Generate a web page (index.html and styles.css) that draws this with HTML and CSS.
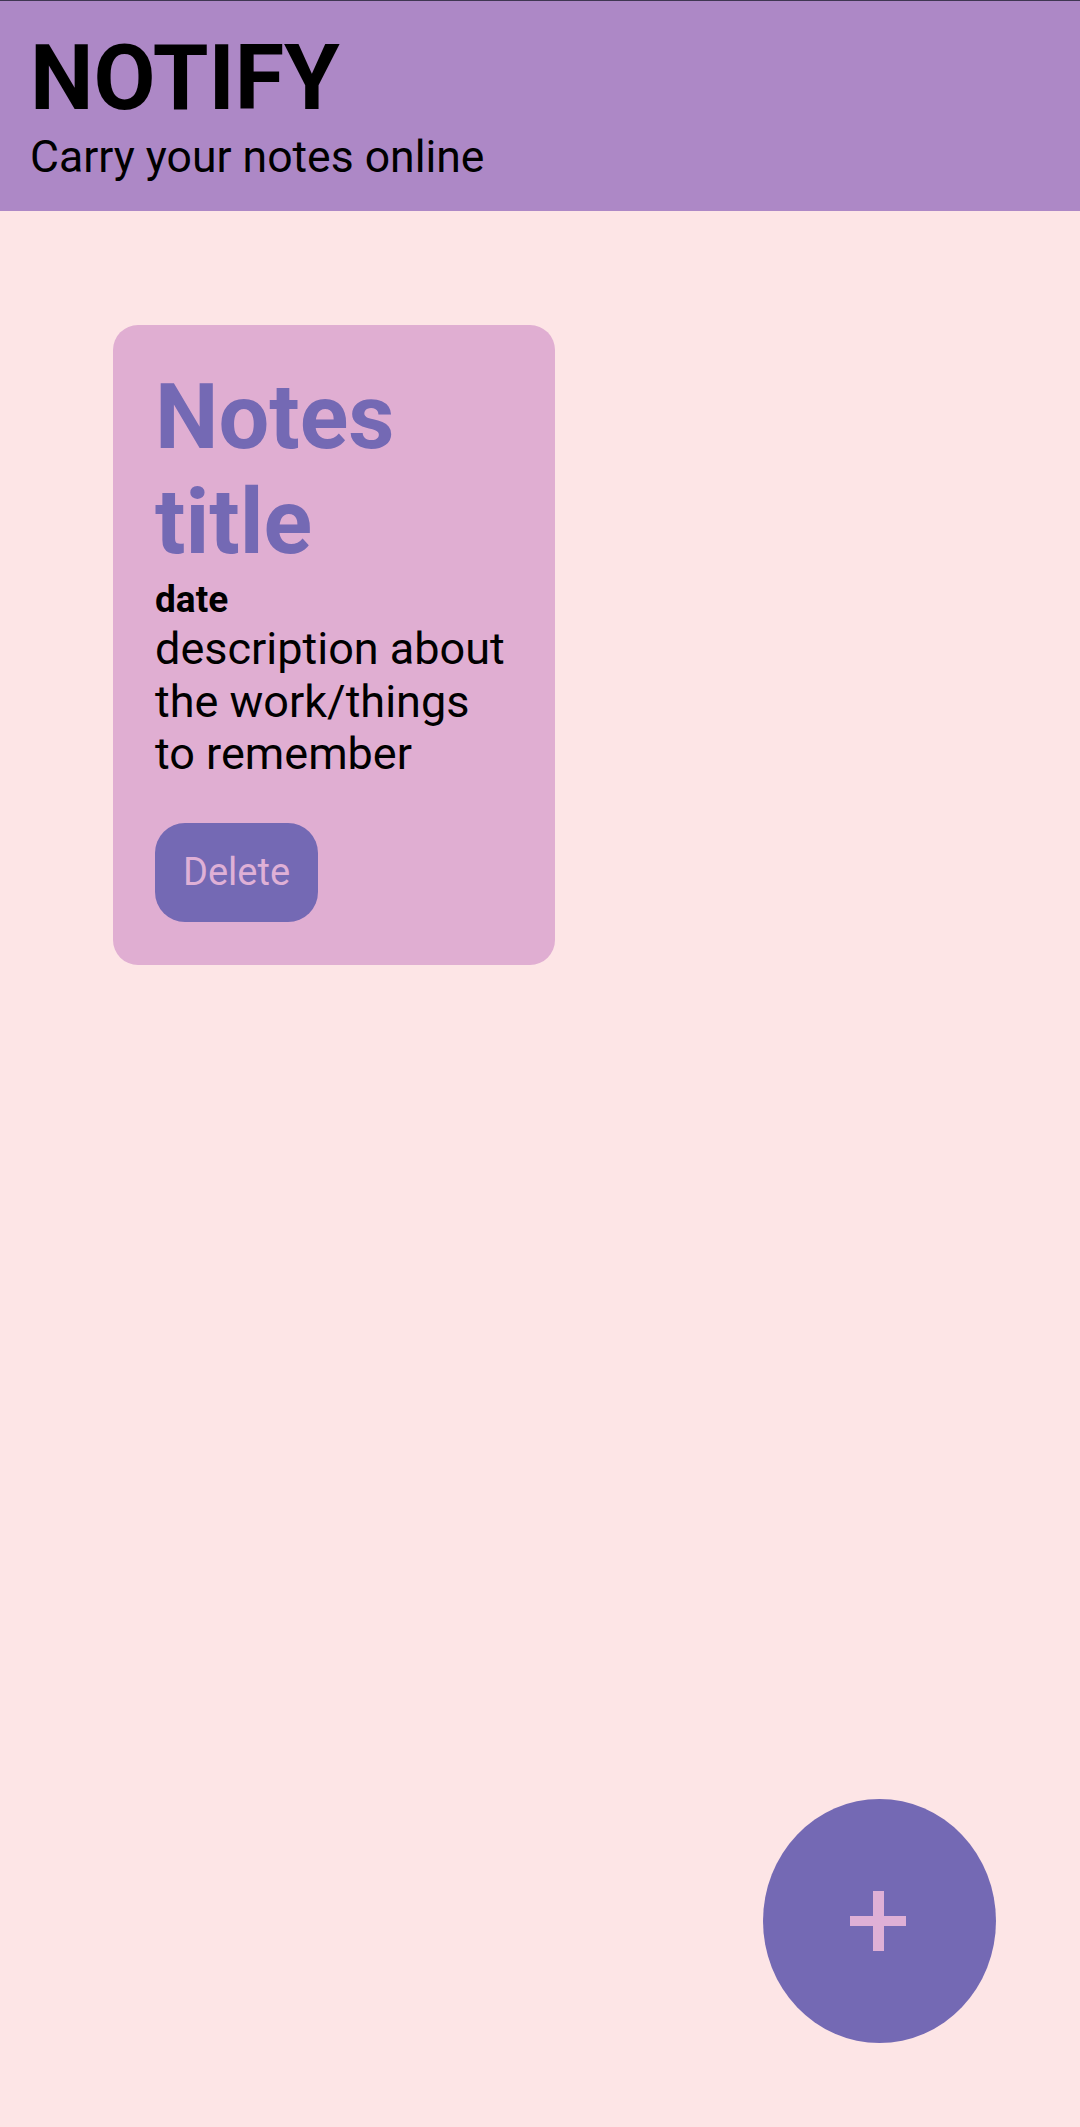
FILE: index.html
```html
<!DOCTYPE html>
<html>
<head>
<meta charset="utf-8">
<link rel="stylesheet" href="styles.css">
</head>
<body>
<header class="header">
  <h1 class="brand">NOTIFY</h1>
  <p class="tagline">Carry your notes online</p>
</header>
<main class="notes">
  <article class="note">
    <h2 class="note-title">Notes title</h2>
    <div class="note-date">date</div>
    <p class="note-desc">description about the work/things to remember</p>
    <button class="delete-btn">Delete</button>
  </article>
</main>
<button class="fab" aria-label="Add note">
  <svg width="60" height="60" viewBox="0 0 60 60"><rect x="0" y="25" width="56" height="10" fill="#dfb0d6"/><rect x="23" y="0" width="11" height="60" fill="#dfb0d6"/></svg>
</button>
</body>
</html>
```
FILE: styles.css
```css
html, body {
  margin: 0;
  padding: 0;
}
body {
  background: #fde5e6;
  font-family: Roboto, "Noto Sans", sans-serif;
  width: 1080px;
  height: 2127px;
  position: relative;
  overflow: hidden;
}
.header {
  background: #ad88c6;
  border-top: 1px solid #3f3652;
  height: 211px;
  box-sizing: border-box;
  padding: 24px 30px 0;
}
.brand {
  margin: 0;
  font-weight: 700;
  font-size: 90px;
  line-height: 108px;
  color: #000;
}
.tagline {
  margin: 0;
  font-size: 44.5px;
  line-height: 48px;
  color: #000;
}
.notes {
  padding: 114px 0 0 113px;
}
.note {
  width: 442px;
  box-sizing: border-box;
  background: #e0aed2;
  border-radius: 25px;
  padding: 40px 42px 43px;
}
.note-title {
  margin: 0;
  font-weight: 700;
  font-size: 90px;
  line-height: 105px;
  color: #7469b4;
}
.note-date {
  font-weight: 700;
  font-size: 37px;
  line-height: 46px;
  color: #000;
  margin-top: 2px;
}
.note-desc {
  margin: 0;
  font-size: 45px;
  line-height: 52.5px;
  color: #000;
}
.delete-btn {
  margin-top: 42px;
  width: 163px;
  height: 99px;
  border: none;
  border-radius: 30px;
  background: #7469b4;
  color: #dfb0d6;
  font-family: Roboto, "Noto Sans", sans-serif;
  font-size: 38px;
  padding: 0;
  display: block;
}
.fab {
  position: absolute;
  left: 763px;
  top: 1799px;
  width: 233px;
  height: 244px;
  border-radius: 50%;
  border: none;
  background: #7469b4;
  display: flex;
  align-items: center;
  justify-content: center;
  padding: 0;
}
```
